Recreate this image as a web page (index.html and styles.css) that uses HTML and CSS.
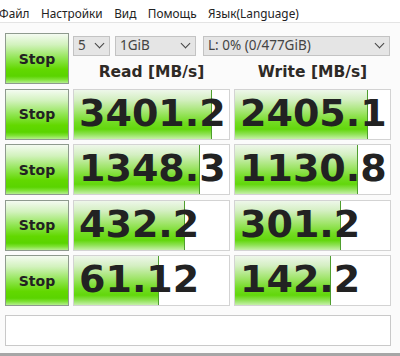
FILE: index.html
```html
<!DOCTYPE html>
<html lang="ru">
<head>
    <meta charset="UTF-8">
    <title>CrystalDiskMark</title>
    <link rel="stylesheet" href="styles.css">
</head>
<body>
    <nav class="menubar">
        <span>Файл</span>
        <span>Настройки</span>
        <span>Вид</span>
        <span>Помощь</span>
        <span>Язык(Language)</span>
    </nav>

    <main class="panel">
        <div class="board">
            <button class="stop">Stop</button>
            <div class="controls">
                <div class="combos">
                    <div class="combo combo-count">5<i class="chev"></i></div>
                    <div class="combo combo-size">1GiB<i class="chev"></i></div>
                    <div class="combo combo-drive">L: 0% (0/477GiB)<i class="chev"></i></div>
                </div>
                <div class="heads">
                    <span>Read [MB/s]</span>
                    <span>Write [MB/s]</span>
                </div>
            </div>

            <button class="stop">Stop</button>
            <div class="result"><div class="bar" style="width: 89%"></div><span>3401.2</span></div>
            <div class="result"><div class="bar" style="width: 86%"></div><span>2405.1</span></div>

            <button class="stop">Stop</button>
            <div class="result"><div class="bar" style="width: 81%"></div><span>1348.3</span></div>
            <div class="result"><div class="bar" style="width: 79.5%"></div><span>1130.8</span></div>

            <button class="stop">Stop</button>
            <div class="result"><div class="bar" style="width: 71.5%"></div><span>432.2</span></div>
            <div class="result"><div class="bar" style="width: 68.5%"></div><span>301.2</span></div>

            <button class="stop">Stop</button>
            <div class="result"><div class="bar" style="width: 55%"></div><span>61.12</span></div>
            <div class="result"><div class="bar" style="width: 62%"></div><span>142.2</span></div>
        </div>

        <div class="comment"></div>
    </main>
    <div class="edge"></div>
</body>
</html>
```

FILE: styles.css
```css
* {
    margin: 0;
    padding: 0;
    box-sizing: border-box;
}

body {
    background: #fbfbfb;
    color: #222;
    font-family: "Noto Sans", "DejaVu Sans", sans-serif;
    width: 400px;
    height: 356px;
    overflow: hidden;
}

.menubar {
    display: flex;
    gap: 11.5px;
    height: 23px;
    padding: 5px 0 0 0;
    margin-left: -1px;
    font-size: 11.8px;
    color: #222;
    border-bottom: 1px solid #e4e4e4;
    background: #fff;
}

.panel {
    padding: 10px 0 0 5px;
}

.board {
    display: grid;
    grid-template-columns: 64px 157px 157px;
    grid-auto-rows: 51px;
    column-gap: 4px;
    row-gap: 4.5px;
}

.stop {
    border: 1px solid #8e9a8e;
    background: linear-gradient(to bottom, #f4fbf1 0%, #d2f2bd 22%, #8fe550 50%, #62d800 72%, #5ad400 86%, #7fe236 93%, #b4ee8e 100%);
    font-family: "DejaVu Sans", sans-serif;
    font-weight: bold;
    font-size: 14px;
    color: #222;
}

.controls {
    grid-column: 2 / 4;
    display: flex;
    flex-direction: column;
}

.combos {
    display: flex;
    margin-top: 3px;
    height: 20px;
}

.combo {
    position: relative;
    height: 20px;
    background: #e5e5e5;
    border: 1px solid #c3c3c3;
    font-size: 13.5px;
    line-height: 17px;
    color: #444;
    padding-left: 4px;
}

.combo-count {
    width: 37px;
}

.combo-size {
    width: 81px;
    margin-left: 5px;
}

.combo-drive {
    width: 187px;
    margin-left: 7px;
}

.chev {
    position: absolute;
    right: 6px;
    top: 3px;
    width: 7px;
    height: 7px;
    border-right: 1.5px solid #444;
    border-bottom: 1.5px solid #444;
    transform: rotate(45deg);
}

.heads {
    display: grid;
    grid-template-columns: 157px 157px;
    column-gap: 4px;
    margin-top: 7px;
    font-family: "DejaVu Sans", sans-serif;
    font-weight: bold;
    font-size: 15.5px;
    color: #2e2a26;
    text-align: center;
}

.result {
    position: relative;
    display: flex;
    align-items: center;
    background: #fff;
    border: 1px solid #d3d3d3;
    padding: 0 0 3px 5px;
    white-space: nowrap;
}

.bar {
    position: absolute;
    left: 0;
    top: 0;
    bottom: 0;
    border-right: 1px solid #4f9e2e;
    background: linear-gradient(to bottom, #eef7ea 0%, #d4efc2 20%, #a1e56c 45%, #72dc22 66%, #62d70c 80%, #8ee254 90%, #c6f0aa 100%);
}

.result span {
    position: relative;
    font-family: "DejaVu Sans", sans-serif;
    font-weight: bold;
    font-size: 38px;
    color: #222;
}

.comment {
    width: 386px;
    height: 31px;
    margin-top: 9px;
    background: #fff;
    border: 1px solid #c9c9c9;
}

.edge {
    margin-top: 7px;
    height: 4px;
    background: #a6a6a6;
}
```
